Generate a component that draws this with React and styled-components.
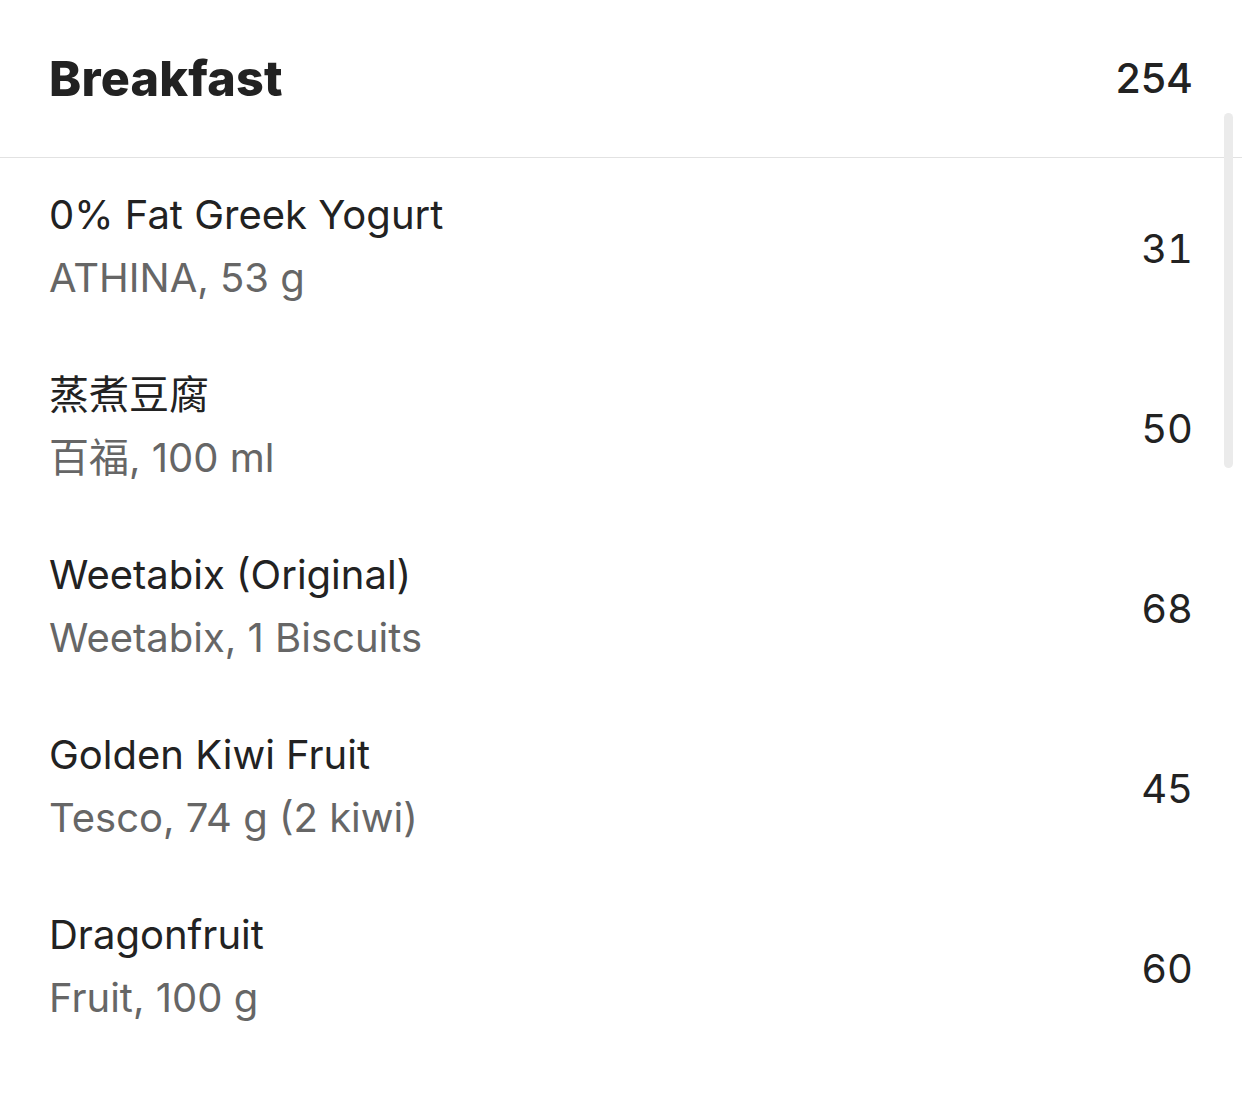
import React from "react";
import styled, { createGlobalStyle } from "styled-components";

const GlobalStyle = createGlobalStyle`
  html, body {
    margin: 0;
    padding: 0;
    background: #ffffff;
  }
  body {
    font-family: Inter, "Noto Sans", "Noto Sans CJK SC", sans-serif;
    -webkit-font-smoothing: antialiased;
  }
`;

const items = [
  { name: "0% Fat Greek Yogurt", detail: "ATHINA, 53 g", kcal: 31 },
  { name: "蒸煮豆腐", detail: "百福, 100 ml", kcal: 50 },
  { name: "Weetabix (Original)", detail: "Weetabix, 1 Biscuits", kcal: 68 },
  { name: "Golden Kiwi Fruit", detail: "Tesco, 74 g (2 kiwi)", kcal: 45 },
  { name: "Dragonfruit", detail: "Fruit, 100 g", kcal: 60 },
];

export default function App() {
  return (
    <>
      <GlobalStyle />
      <Screen>
        <Header>
          <MealTitle>Breakfast</MealTitle>
          <MealTotal>254</MealTotal>
        </Header>
        <List>
          {items.map((item) => (
            <Row key={item.name}>
              <Info>
                <FoodName>{item.name}</FoodName>
                <FoodDetail>{item.detail}</FoodDetail>
              </Info>
              <Kcal>{item.kcal}</Kcal>
            </Row>
          ))}
          <ScrollIndicator />
        </List>
      </Screen>
    </>
  );
}

const Screen = styled.div`
  width: 1242px;
  height: 1100px;
  background: #fff;
  overflow: hidden;
  color: #222;
`;

const Header = styled.div`
  height: 157px;
  display: flex;
  align-items: center;
  justify-content: space-between;
  padding: 0 49px 0 49px;
  border-bottom: 1px solid #e2e2e2;
`;

const MealTitle = styled.h1`
  margin: 0 0 1px;
  font-size: 48.5px;
  font-weight: 800;
  letter-spacing: 0.2px;
  color: #222;
`;

const MealTotal = styled.span`
  margin-bottom: 1px;
  font-size: 41px;
  font-weight: 500;
  color: #222;
`;

const List = styled.div`
  position: relative;
`;

const Row = styled.div`
  height: 180px;
  display: flex;
  align-items: center;
  justify-content: space-between;
  padding: 0 49px;
  box-sizing: border-box;
`;

const Info = styled.div`
  display: flex;
  flex-direction: column;
  margin-top: -3px;
`;

const FoodName = styled.div`
  font-size: 40px;
  line-height: 58px;
  color: #222;
`;

const FoodDetail = styled.div`
  margin-top: 5px;
  font-size: 40px;
  line-height: 58px;
  color: #666;
`;

const Kcal = styled.div`
  font-size: 40px;
  font-variant-numeric: tabular-nums;
  color: #222;
`;

const ScrollIndicator = styled.div`
  position: absolute;
  top: -45px;
  right: 9px;
  width: 9px;
  height: 355px;
  border-radius: 5px;
  background: #ebebeb;
`;
